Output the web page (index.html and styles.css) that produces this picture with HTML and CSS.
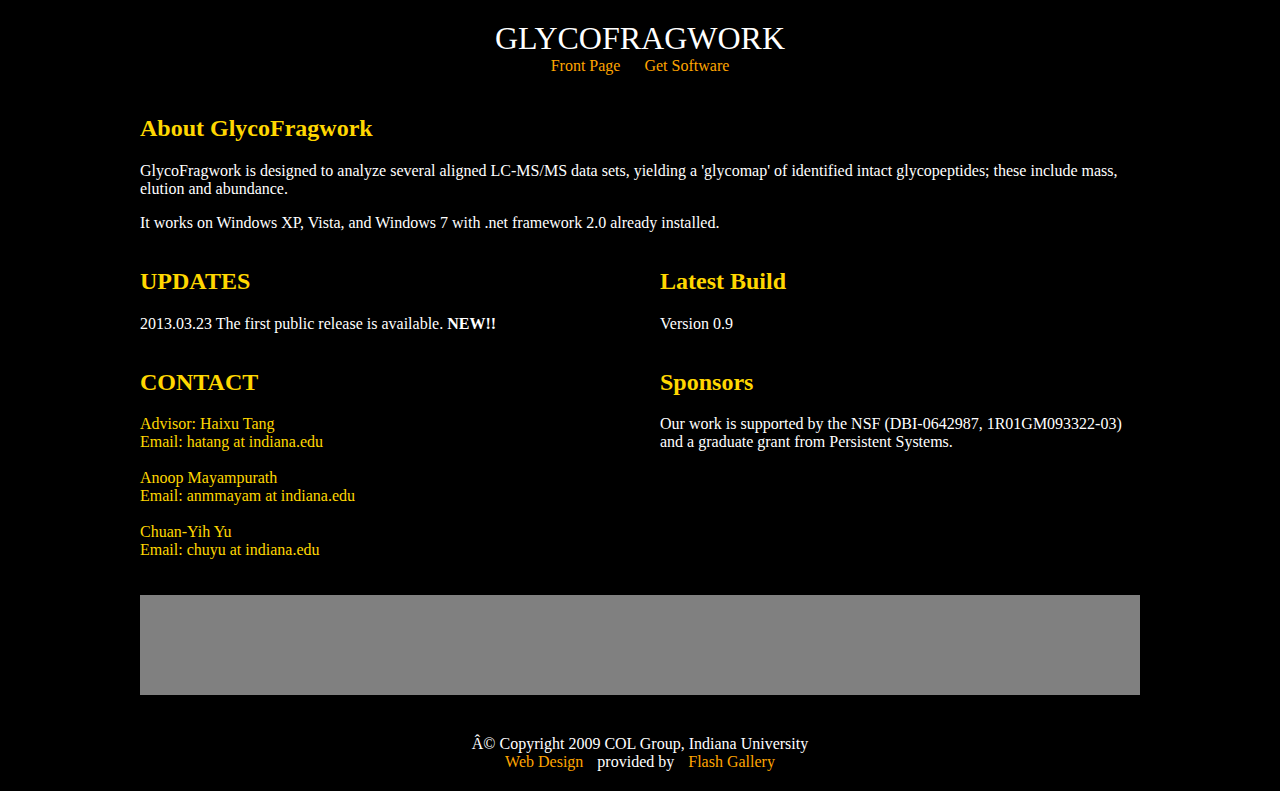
FILE: index.html
```html
<!DOCTYPE html>
<html>
<head>
<meta charset="utf-8">
<title>GlycoFragwork</title>
<link rel="stylesheet" href="styles.css">
</head>
<body>
<div class="header">
  <div class="title">GLYCOFRAGWORK</div>
  <div class="nav"><a href="#">Front Page</a><a href="#">Get Software</a></div>
</div>
<div class="main">
  <div class="section">
    <h2>About GlycoFragwork</h2>
    <p>GlycoFragwork is designed to analyze several aligned LC-MS/MS data sets, yielding a 'glycomap' of identified intact glycopeptides; these include mass, elution and abundance.</p>
    <p>It works on Windows XP, Vista, and Windows 7 with .net framework 2.0 already installed.</p>
  </div>
  <div class="grid">
    <div class="section">
      <h2>UPDATES</h2>
      <p>2013.03.23 The first public release is available. <b>NEW!!</b></p>
    </div>
    <div class="section">
      <h2>Latest Build</h2>
      <p>Version 0.9</p>
    </div>
    <div class="section lower contact">
      <h2>CONTACT</h2>
      <p>Advisor: Haixu Tang<br>Email: hatang at indiana.edu</p>
      <p>Anoop Mayampurath<br>Email: anmmayam at indiana.edu</p>
      <p>Chuan-Yih Yu<br>Email: chuyu at indiana.edu</p>
    </div>
    <div class="section lower">
      <h2>Sponsors</h2>
      <p>Our work is supported by the NSF (DBI-0642987, 1R01GM093322-03) and a graduate grant from Persistent Systems.</p>
    </div>
  </div>
  <div class="banner"></div>
</div>
<div class="footer">
  <div>Â© Copyright 2009 COL Group, Indiana University</div>
  <div class="credits"><a href="#">Web Design</a><span>provided by</span><a href="#">Flash Gallery</a></div>
</div>
</body>
</html>
```
FILE: styles.css
```css
html, body {
  background: #000;
}
body {
  margin: 0;
  color: #fff;
  font-family: "Liberation Serif", "Times New Roman", serif;
  font-size: 16px;
  line-height: 18px;
}
a {
  color: #ffa500;
  text-decoration: none;
}
.header {
  padding-top: 20px;
  text-align: center;
}
.title {
  font-size: 32px;
  line-height: 37px;
}
.nav {
  display: flex;
  justify-content: center;
  gap: 24px;
}
.main {
  width: 1000px;
  margin: 39px auto 0;
}
h2 {
  color: #ffd700;
  font-size: 24px;
  line-height: 28px;
  font-weight: bold;
  margin: 0 0 20px;
}
.lower h2 {
  margin-bottom: 19px;
}
p {
  margin: 0 0 16px;
}
.section p:last-child {
  margin-bottom: 0;
}
.grid {
  display: grid;
  grid-template-columns: 520px 1fr;
  row-gap: 35px;
  margin-top: 35px;
}
.contact p {
  color: #ffd700;
  margin-bottom: 18px;
}
.banner {
  margin-top: 36px;
  height: 100px;
  background: #808080;
}
.footer {
  margin-top: 40px;
  text-align: center;
  padding-bottom: 20px;
}
.credits {
  display: flex;
  justify-content: center;
  gap: 14px;
}
```
